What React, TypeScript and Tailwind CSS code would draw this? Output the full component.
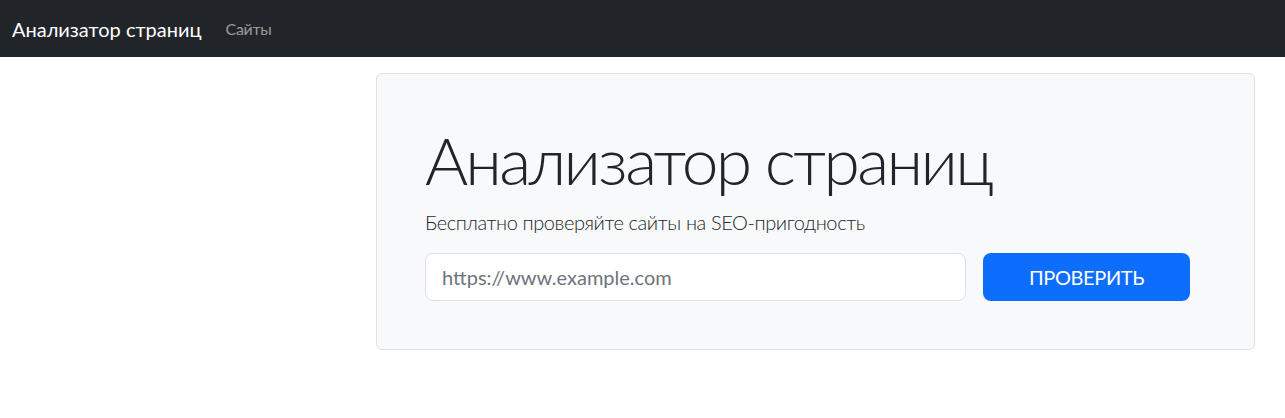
export default function App() {
  return (
    <div className="min-h-screen bg-white text-[#212529]" style={{ fontFamily: 'Lato, "Open Sans", sans-serif' }}>
      <nav className="h-[57px] bg-[#212529] flex items-center px-3">
        <a className="text-white text-[20px] mr-6" href="#">
          Анализатор страниц
        </a>
        <a className="text-[rgba(255,255,255,0.55)] text-[16px] tracking-[-0.02em]" href="#">
          Сайты
        </a>
      </nav>

      <main className="flex pt-4">
        <div className="w-[376px] shrink-0" />
        <div className="w-[879px] bg-[#f8f9fa] border border-[#dee2e6] rounded-md p-12">
          <h1 className="text-[66px] font-light leading-[76px] tracking-[-0.04em] mb-[9px]">
            Анализатор страниц
          </h1>
          <p className="text-[20px] font-light leading-[1.5] tracking-[-0.02em] mb-4">
            Бесплатно проверяйте сайты на SEO-пригодность
          </p>
          <form className="flex gap-[17px]" onSubmit={(e) => e.preventDefault()}>
            <input
              type="text"
              placeholder="https://www.example.com"
              className="w-[541px] h-[48px] bg-white border border-[#dee2e6] rounded-lg px-4 text-[20px] placeholder:text-[#6c757d] outline-none"
            />
            <button
              type="submit"
              className="w-[207px] h-[48px] bg-[#0d6efd] text-white rounded-lg text-[20px] tracking-[-0.02em]"
            >
              ПРОВЕРИТЬ
            </button>
          </form>
        </div>
      </main>
    </div>
  );
}
